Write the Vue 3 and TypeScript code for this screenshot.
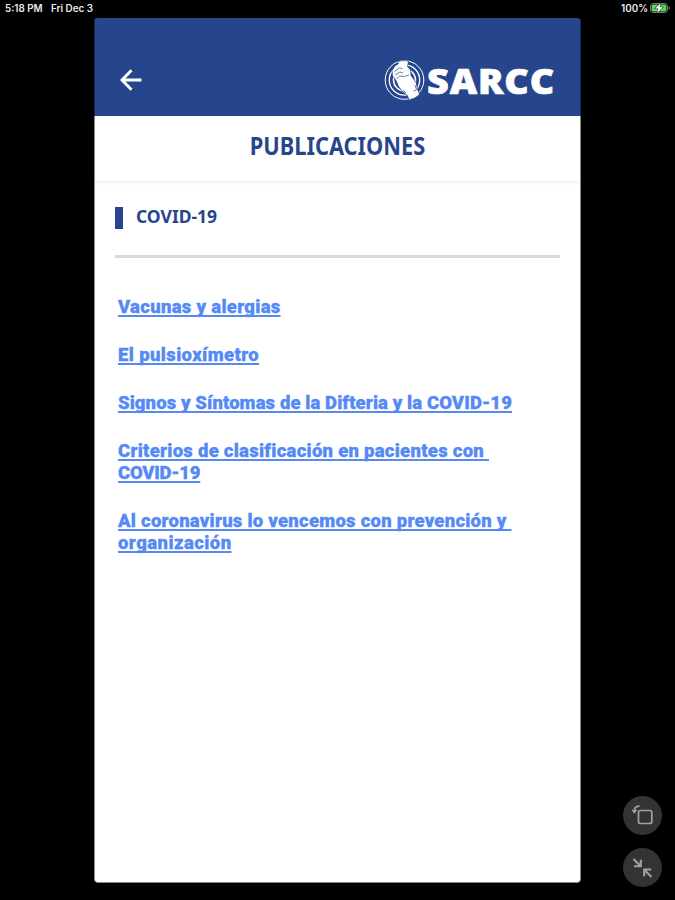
<script setup lang="ts">
interface Line {
  text: string
  tracking: number
}

interface Publication {
  id: number
  lines: Line[]
}

const publications: Publication[] = [
  { id: 1, lines: [{ text: 'Vacunas y alergias', tracking: 0.3 }] },
  { id: 2, lines: [{ text: 'El pulsioxímetro', tracking: 0.38 }] },
  { id: 3, lines: [{ text: 'Signos y Síntomas de la Difteria y la COVID-19', tracking: 0.1 }] },
  {
    id: 4,
    lines: [
      { text: 'Criterios de clasificación en pacientes con ', tracking: 0.27 },
      { text: 'COVID-19', tracking: -0.25 },
    ],
  },
  {
    id: 5,
    lines: [
      { text: 'Al coronavirus lo vencemos con prevención y ', tracking: 0.25 },
      { text: 'organización', tracking: 0.45 },
    ],
  },
]
</script>

<template>
  <div class="screen">
    <div class="status">
      <span class="clock">5:18 PM</span>
      <span class="date">Fri Dec 3</span>
      <span class="percent">100%</span>
      <svg class="battery" width="20" height="10" viewBox="0 0 20 10">
        <rect x="0.5" y="0.5" width="17" height="9" rx="2.6" fill="none" stroke="#777" />
        <rect x="1.6" y="1.6" width="14.8" height="6.8" rx="1.6" fill="#5fd463" />
        <path d="M18.6 3.3v3.4q1.1-.6 1.1-1.7t-1.1-1.7z" fill="#888" />
        <path d="M10.8 0 5.2 5.5h3.2L7 10l5.8-5.7H9.500z" fill="#fff" stroke="#163d18" stroke-width="1.1" paint-order="stroke" />
      </svg>
    </div>

    <main class="app">
      <header class="bar">
        <button class="back" aria-label="Volver">
          <svg width="22" height="22" viewBox="0 0 22 22" fill="none" stroke="#fff" stroke-width="2.9">
            <path d="M21.500 11H2.300M11.500 1.300 2 11l9.500 9.700" />
          </svg>
        </button>
        <svg class="logo" width="173" height="42" viewBox="0 0 173 42">
          <g fill="none" stroke="#fff">
            <circle cx="20.500" cy="21" r="19.300" stroke-width="1" />
            <circle cx="20.500" cy="21" r="15.200" stroke-width="1.300" />
            <circle cx="20.500" cy="21" r="11" stroke-width="1.500" />
          </g>
          <path
            d="M13.500 2.500Q19 .8 24.500 2l-1 5.500 3 3.500 .5 5.500 5 7 1.500 6.500 2 5.500q-4 4-10.500 5.500l-1.500-4.500-5-4-4-5-2.500-6-3.500-5-.5-4.500 2.500-4.500 4-3z"
            fill="#fff" stroke="#27458d" stroke-width="0.7"
          />
          <path
            d="m10.500 12.500 5-3.500 3 .5M11 16l5-3 3 1M25 16l-4.500 1.500-5-.5-3 3M19 31l3 3M31 26l1.500 5-3 1"
            fill="none" stroke="#27458d" stroke-width="0.7"
          />
          <text class="brand" x="43" y="35" textLength="128" lengthAdjust="spacingAndGlyphs">SARCC</text>
        </svg>
      </header>

      <div class="page">
        <div class="heading"><h1>PUBLICACIONES</h1></div>

        <section class="content">
          <div class="topic">
            <i class="marker"></i>
            <h2>COVID-19</h2>
          </div>
          <ul class="links">
            <li v-for="p in publications" :key="p.id">
              <a>
                <span
                  v-for="line in p.lines"
                  :key="line.text"
                  class="line"
                  :style="{ letterSpacing: `${line.tracking}px` }"
                >{{ line.text }}</span>
              </a>
            </li>
          </ul>
        </section>
      </div>
    </main>

    <div class="controls">
      <button class="round" aria-label="Girar">
        <svg width="22" height="22" viewBox="0 0 22 22" fill="none" stroke="#a1a1a1" stroke-width="1.700">
          <rect x="6.500" y="5.500" width="13.300" height="13" rx="2" />
          <path d="M7.600 1.200Q2.700 1.200 2.400 5" />
          <path d="M-.6 4.700h6L2.400 8.700z" fill="#a1a1a1" stroke="none" />
        </svg>
      </button>
      <button class="round" aria-label="Reducir">
        <svg width="22" height="22" viewBox="0 0 22 22" fill="none" stroke="#a1a1a1" stroke-width="2.100">
          <path d="m1.500 2 7 7M2 9.300h6.800V2.800M19.500 20l-7-7M12.200 19.300v-6.800h7" />
        </svg>
      </button>
    </div>
  </div>
</template>

<style>
body {
  margin: 0;
  background: #000;
}
</style>

<style scoped>
.screen {
  position: relative;
  box-sizing: border-box;
  width: 675px;
  height: 900px;
  overflow: hidden;
  background: #000;
  font-family: Inter, sans-serif;
}
.status {
  display: flex;
  align-items: center;
  box-sizing: border-box;
  height: 17.500px;
  padding: 0 5px 1px;
  color: #e8e8e8;
  font-size: 9.800px;
  font-weight: 600;
  line-height: 15px;
}
.date {
  margin-left: 8.500px;
}
.percent {
  margin-left: auto;
}
.battery {
  margin-left: 2px;
}
.app {
  display: flex;
  flex-direction: column;
  width: 487px;
  height: 865px;
  margin-left: 94px;
  overflow: hidden;
  border-radius: 4px;
}
.bar {
  display: flex;
  align-items: flex-start;
  justify-content: space-between;
  box-sizing: border-box;
  height: 98.500px;
  padding: 41px 24px 0 26px;
  border: solid #172a56;
  border-width: 0 1px;
  padding-left: 25px;
  padding-right: 23px;
  background: #27458d;
}
.page {
  flex: 1;
  border: 1px solid #888;
  border-top: 0;
  border-radius: 0 0 4px 4px;
  background: #fff;
}
button {
  display: flex;
  align-items: center;
  justify-content: center;
  padding: 0;
  border: 0;
  background: none;
}
.back {
  margin-top: 10px;
}
.logo {
  overflow: visible;
}
.brand {
  fill: #fff;
  stroke: #fff;
  stroke-width: 0.700px;
  font-family: "Open Sans", sans-serif;
  font-size: 34.500px;
  font-weight: 800;
  letter-spacing: 0.800px;
}
.heading {
  box-sizing: border-box;
  height: 65px;
  padding-top: 14px;
  box-shadow: 0 2px 3px rgba(0, 0, 0, 0.06);
}
h1,
h2 {
  margin: 0;
  color: #27458d;
  font-family: "Noto Sans", sans-serif;
  font-weight: 700;
}
h1 {
  font-size: 24.500px;
  line-height: 32px;
  text-align: center;
  transform: scaleX(0.89);
}
.content {
  padding: 26px 20px 0;
}
.topic {
  display: flex;
  align-items: flex-start;
  box-sizing: border-box;
  height: 51px;
  border-bottom: 3px solid #dadadd;
}
.marker {
  width: 8px;
  height: 22px;
  background: #27458d;
}
h2 {
  margin: -3px 0 0 13px;
  font-size: 18.500px;
  line-height: 24px;
  transform: scaleX(0.945);
  transform-origin: left;
}
.links {
  display: flex;
  flex-direction: column;
  gap: 26px;
  margin: 0;
  padding: 38px 3px 0;
  list-style: none;
}
.links a {
  display: flex;
  flex-direction: column;
  align-items: flex-start;
  color: #5589f5;
  font-family: Roboto, sans-serif;
  font-size: 18.500px;
  font-weight: 900;
  line-height: 22px;
}
.line {
  white-space: pre;
  text-decoration: underline;
  text-decoration-thickness: 2px;
  text-decoration-skip-ink: none;
  text-underline-offset: 2px;
  -webkit-text-stroke: 0.300px #5589f5;
}
.controls {
  position: absolute;
  right: 13px;
  bottom: 13px;
  display: flex;
  flex-direction: column;
  gap: 13px;
}
.round {
  width: 39px;
  height: 39px;
  border-radius: 50%;
  background: #333;
}
</style>
